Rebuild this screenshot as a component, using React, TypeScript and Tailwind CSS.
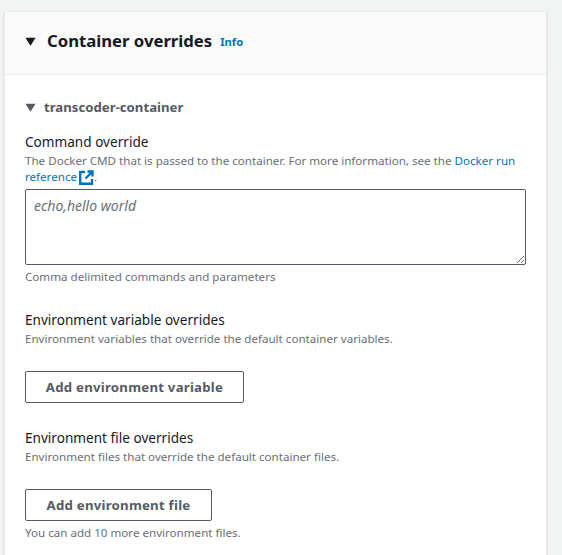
const font = "font-['Noto_Sans','Open_Sans',sans-serif]";

function Caret({ size }: { size: number }) {
  return (
    <svg width={size} height={size} viewBox="0 0 12 12" className="shrink-0">
      <path d="M0.5 2h11L6 10.5z" fill="currentColor" />
    </svg>
  );
}

function External() {
  return (
    <svg width="15" height="15" viewBox="0 0 15 15" fill="none" stroke="#0073bb" strokeWidth="2.4" className="ml-[2px] inline-block align-[-4px]">
      <path d="M6 2H1.2v11.8H13V9" />
      <path d="M8.5 1.5h5v5M13 2L6.5 8.5" />
    </svg>
  );
}

function Label({ title, desc }: { title: string; desc: string }) {
  return (
    <div>
      <div className="text-[13.6px] leading-[20px] text-[#16191f]">{title}</div>
      <div className="mt-[1px] text-[11.6px] leading-[16px] text-[#687078]">{desc}</div>
    </div>
  );
}

function Btn({ children, w }: { children: string; w: string }) {
  return (
    <button className={`h-[32px] ${w} rounded-[2px] border border-[#545b64] bg-white pt-[1px] text-[13.2px] font-bold tracking-[0.25px] text-[#545b64]`}>
      {children}
    </button>
  );
}

export default function App() {
  return (
    <div className={`${font} h-[555px] w-[562px] overflow-hidden bg-[#f2f3f3] pl-[4px] pt-[11px]`}>
      <div className="h-[600px] w-[543px] border-x border-t border-[#eaeded] bg-white shadow-[0_1px_1px_0_rgba(0,28,36,0.3)]">
        <div className="flex h-[63px] items-center border-b border-[#eaeded] bg-[#fafafa] pb-[4px] pl-[20px]">
          <span className="text-[#16191f]"><Caret size={11} /></span>
          <span className="ml-[11px] text-[16.7px] font-bold text-[#16191f]">Container overrides</span>
          <span className="ml-[8px] pt-[3px] text-[11.2px] font-bold text-[#0073bb]">Info</span>
        </div>
        <div className="px-[20px] pt-[22px]">
          <div className="flex items-center gap-[8px] text-[#545b64]">
            <Caret size={11} />
            <span className="text-[13.2px] font-bold leading-[20px]">transcoder-container</span>
          </div>
          <div className="mt-[15px] text-[13.6px] leading-[20px] text-[#16191f]">Command override</div>
          <p className="mt-[1px] w-[500px] text-[11.6px] leading-[16px] text-[#687078]">
            The Docker CMD that is passed to the container. For more information, see the <span className="text-[#0073bb]">Docker run reference</span>
            <External />.
          </p>
          <textarea
            readOnly
            placeholder="echo,hello world"
            className="mt-[4px] block h-[76px] w-[501px] rounded-[2px] border border-[#545b64] px-[8px] py-[5px] text-[14px] italic leading-[22px] placeholder:text-[#687078]"
          />
          <div className="mt-[4px] text-[11.6px] leading-[16px] text-[#687078]">Comma delimited commands and parameters</div>
          <div className="mt-[25px]">
            <Label title="Environment variable overrides" desc="Environment variables that override the default container variables." />
          </div>
          <div className="mt-[24px]"><Btn w="w-[219px]">Add environment variable</Btn></div>
          <div className="mt-[25px]">
            <Label title="Environment file overrides" desc="Environment files that override the default container files." />
          </div>
          <div className="mt-[24px]"><Btn w="w-[187px]">Add environment file</Btn></div>
          <div className="mt-[4px] text-[11.6px] leading-[16px] text-[#687078]">You can add 10 more environment files.</div>
        </div>
      </div>
    </div>
  );
}
